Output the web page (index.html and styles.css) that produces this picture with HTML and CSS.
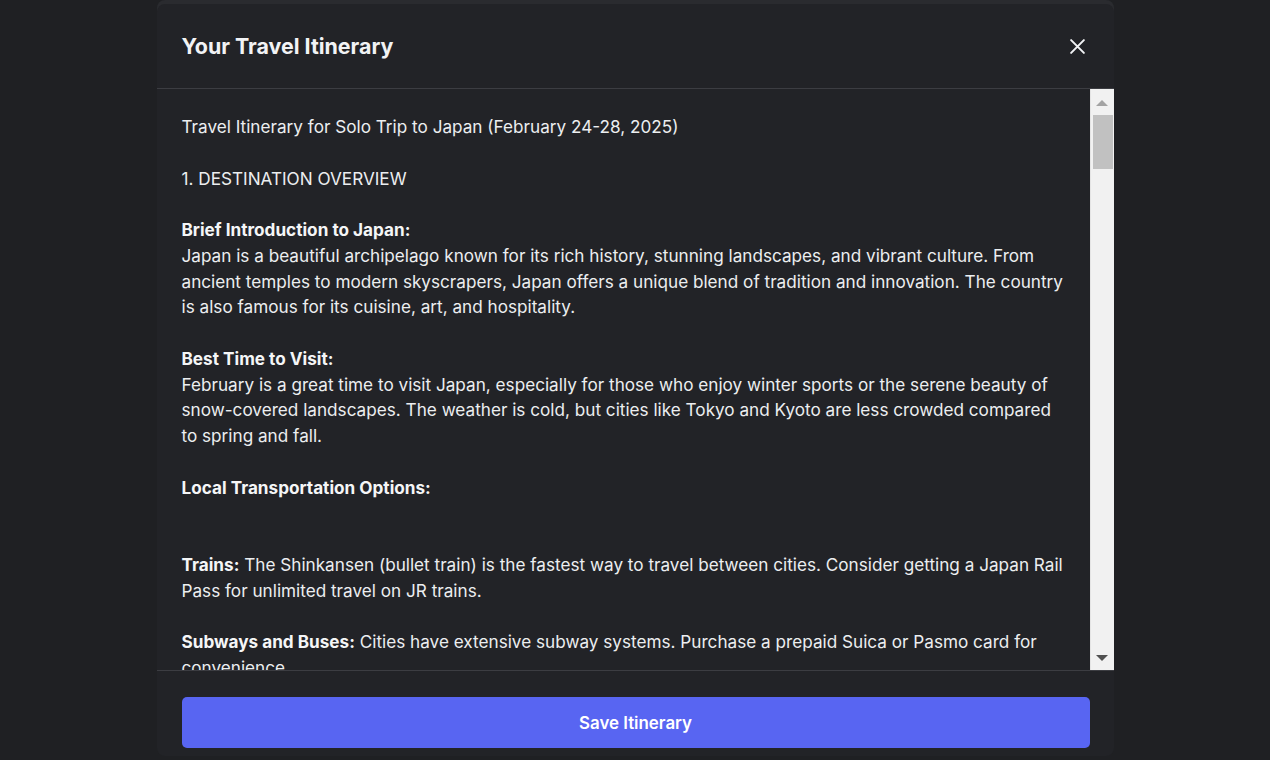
FILE: index.html
```html
<!DOCTYPE html>
<html lang="en">
<head>
<meta charset="utf-8">
<title>Your Travel Itinerary</title>
<link rel="stylesheet" href="styles.css">
</head>
<body>
<div class="modal">
  <div class="modal-header">
    <h2 class="modal-title">Your Travel Itinerary</h2>
    <button class="close-btn" aria-label="Close">
      <svg width="17" height="17" viewBox="0 0 16 16"><path d="M2 2 L14 14 M14 2 L2 14" stroke="#f2f3f5" stroke-width="1.9" stroke-linecap="round" fill="none"/></svg>
    </button>
  </div>
  <div class="modal-body">
    <div class="itinerary">Travel Itinerary for Solo Trip to Japan (February 24-28, 2025)

1. DESTINATION OVERVIEW

<strong>Brief Introduction to Japan:</strong>
Japan is a beautiful archipelago known for its rich history, stunning landscapes, and vibrant culture. From ancient temples to modern skyscrapers, Japan offers a unique blend of tradition and innovation. The country is also famous for its cuisine, art, and hospitality.

<strong>Best Time to Visit:</strong>
February is a great time to visit Japan, especially for those who enjoy winter sports or the serene beauty of snow-covered landscapes. The weather is cold, but cities like Tokyo and Kyoto are less crowded compared to spring and fall.

<strong>Local Transportation Options:</strong>


<strong>Trains:</strong> The Shinkansen (bullet train) is the fastest way to travel between cities. Consider getting a Japan Rail Pass for unlimited travel on JR trains.

<strong>Subways and Buses:</strong> Cities have extensive subway systems. Purchase a prepaid Suica or Pasmo card for convenience.

<strong>Taxis:</strong> Available but expensive. Useful for short trips or late at night.</div>
    <div class="scrollbar">
      <div class="sb-btn"><span class="tri-up"></span></div>
      <div class="sb-track"><div class="sb-thumb"></div></div>
      <div class="sb-btn"><span class="tri-down"></span></div>
    </div>
  </div>
  <div class="modal-footer">
    <button class="save-btn">Save Itinerary</button>
  </div>
</div>
</body>
</html>
```

FILE: styles.css
```css
* { box-sizing: border-box; }
html, body {
  margin: 0;
  padding: 0;
  height: 100%;
  background: #1f2023;
  overflow: hidden;
}
body {
  display: flex;
  justify-content: center;
  font-family: Inter, "Liberation Sans", sans-serif;
  color: #eceef0;
}
.modal {
  width: 957px;
  height: 752px;
  margin-top: 4px;
  background: #222327;
  border-radius: 8px;
  box-shadow: 0 -4px 0 #2a2b2f;
  display: flex;
  flex-direction: column;
}
.modal-header {
  height: 85px;
  flex: none;
  display: flex;
  align-items: center;
  justify-content: space-between;
  padding: 0 25px 0 25px;
  border-bottom: 1px solid #3c3d42;
}
.modal-title {
  margin: 0;
  font-size: 21.4px;
  font-weight: 700;
  color: #f2f3f5;
  padding-bottom: 1px;
}
.close-btn {
  background: none;
  border: 0;
  padding: 0;
  width: 22px;
  height: 22px;
  display: flex;
  align-items: center;
  justify-content: center;
  cursor: pointer;
}
.modal-body {
  height: 582px;
  flex: none;
  display: flex;
  border-bottom: 1px solid #3c3d42;
}
.itinerary {
  flex: 1;
  overflow: hidden;
  padding: 25px 25px 0 25px;
  font-size: 17.17px;
  line-height: 25.75px;
  white-space: pre-wrap;
  color: #eceef0;
}
.itinerary strong {
  font-weight: 700;
  color: #f5f6f7;
}
.scrollbar {
  width: 24px;
  flex: none;
  background: #f1f1f1;
  border-left: 1px solid #e4e4e4;
  display: flex;
  flex-direction: column;
}
.sb-btn {
  height: 26px;
  display: flex;
  align-items: center;
  justify-content: center;
}
.tri-up {
  width: 0;
  height: 0;
  border-left: 6px solid transparent;
  border-right: 6px solid transparent;
  border-bottom: 6px solid #a3a3a3;
  margin-top: 1px;
}
.tri-down {
  width: 0;
  height: 0;
  border-left: 6px solid transparent;
  border-right: 6px solid transparent;
  border-top: 6px solid #505050;
  margin-top: 2px;
}
.sb-track {
  flex: 1;
  padding: 0 1px 0 2px;
}
.sb-thumb {
  height: 54px;
  background: #c1c1c1;
}
.modal-footer {
  flex: 1;
  padding: 26px 24px 0 25px;
}
.save-btn {
  width: 908px;
  height: 51px;
  border: 0;
  border-radius: 5px;
  background: #5865f2;
  color: #ffffff;
  font-family: Inter, "Liberation Sans", sans-serif;
  font-size: 16.9px;
  font-weight: 600;
  cursor: pointer;
}
```
